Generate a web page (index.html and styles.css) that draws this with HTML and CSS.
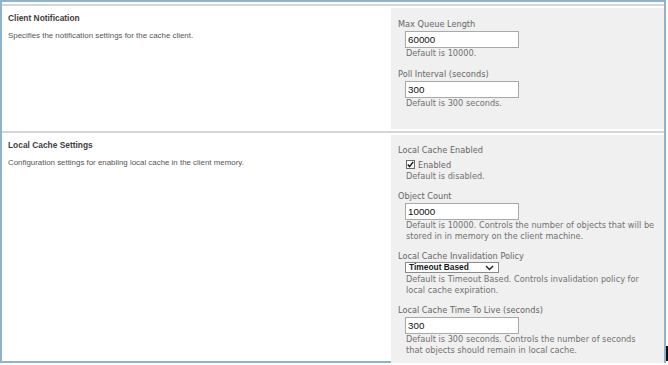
FILE: index.html
```html
<!DOCTYPE html>
<html>
<head>
<meta charset="utf-8">
<link rel="stylesheet" href="styles.css">
</head>
<body>
<div class="frame">
  <div class="section">
    <div class="info">
      <div class="title">Client Notification</div>
      <div class="summary">Specifies the notification settings for the cache client.</div>
    </div>
    <div class="fields first">
      <div class="field">
        <div class="label">Max Queue Length</div>
        <div class="textbox">60000</div>
        <div class="desc">Default is 10000.</div>
      </div>
      <div class="field">
        <div class="label">Poll Interval (seconds)</div>
        <div class="textbox">300</div>
        <div class="desc">Default is 300 seconds.</div>
      </div>
    </div>
  </div>
  <div class="section">
    <div class="info">
      <div class="title">Local Cache Settings</div>
      <div class="summary">Configuration settings for enabling local cache in the client memory.</div>
    </div>
    <div class="fields second">
      <div class="field">
        <div class="label">Local Cache Enabled</div>
        <div class="check-row">
          <span class="checkbox"><svg width="7" height="7" viewBox="0 0 7 7"><path d="M0.8 3.6 L2.6 5.6 L6.2 0.9" fill="none" stroke="#1b1b1b" stroke-width="1.5"/></svg></span>
          <span class="check-label">Enabled</span>
        </div>
        <div class="desc">Default is disabled.</div>
      </div>
      <div class="field">
        <div class="label">Object Count</div>
        <div class="textbox">10000</div>
        <div class="desc">Default is 10000. Controls the number of objects that will be<br>stored in in memory on the client machine.</div>
      </div>
      <div class="field">
        <div class="label">Local Cache Invalidation Policy</div>
        <div class="select"><span>Timeout Based</span><svg class="chev" width="9" height="6" viewBox="0 0 9 6"><path d="M1 1 L4.5 4.6 L8 1" fill="none" stroke="#222" stroke-width="1.4"/></svg></div>
        <div class="desc">Default is Timeout Based. Controls invalidation policy for<br>local cache expiration.</div>
      </div>
      <div class="field">
        <div class="label">Local Cache Time To Live (seconds)</div>
        <div class="textbox">300</div>
        <div class="desc">Default is 300 seconds. Controls the number of seconds<br>that objects should remain in local cache.</div>
      </div>
    </div>
  </div>
  <div class="edge-mark"></div>
</div>
</body>
</html>
```

FILE: styles.css
```css
html, body {
  margin: 0;
  padding: 0;
  background: #ffffff;
}

.frame {
  position: relative;
  width: 662px;
  height: 359px;
  border: 2px solid #8fb3cd;
  display: flex;
  flex-direction: column;
}

.section {
  display: flex;
  margin-top: 2px;
  padding-top: 2px;
  border-top: 2px solid #d6d6d6;
}

.section:last-of-type {
  flex: 1;
}

.info {
  flex: 1;
  padding: 5px 0 0 6px;
  font-family: "Liberation Sans", Arial, sans-serif;
}

.title {
  font-size: 8.4px;
  font-weight: bold;
  color: #3d3d3d;
  line-height: 11px;
}

.summary {
  margin-top: 6px;
  font-size: 7.9px;
  color: #555555;
  line-height: 11px;
}

.fields {
  width: 266px;
  background: #f0f0f0;
  padding: 11px 0 20px 7px;
  display: flex;
  flex-direction: column;
  gap: 10px;
  font-family: "DejaVu Sans", Verdana, sans-serif;
  font-size: 8.2px;
  line-height: 10px;
}

.fields.second {
  padding-top: 10px;
  gap: 9px;
}

.label {
  color: #666666;
  white-space: nowrap;
}

.textbox {
  margin: 2px 0 0 7px;
  width: 114px;
  height: 17px;
  box-sizing: border-box;
  border: 1px solid #a9a9a9;
  background: #ffffff;
  padding: 0 2px;
  font-family: "Liberation Sans", Arial, sans-serif;
  font-size: 9.8px;
  line-height: 15px;
  color: #111111;
}

.desc {
  margin: 0 0 0 8px;
  color: #707070;
  line-height: 11px;
  white-space: nowrap;
}

.check-row {
  margin: 3px 0 0 8px;
  height: 13px;
  display: flex;
  align-items: center;
  gap: 3px;
}

.checkbox {
  width: 9px;
  height: 9px;
  box-sizing: border-box;
  border: 1px solid #6a6a6a;
  background: #fdfdfd;
  display: flex;
  align-items: center;
  justify-content: center;
}

.check-label {
  color: #666666;
}

.select {
  margin: 1px 0 1px 7px;
  width: 94px;
  height: 11px;
  box-sizing: border-box;
  border: 1px solid #8a8a8a;
  background: #ffffff;
  display: flex;
  align-items: center;
  justify-content: space-between;
  padding: 0 4px 0 3px;
  font-family: "Liberation Sans", Arial, sans-serif;
  font-size: 8.4px;
  font-weight: bold;
  color: #1a1a1a;
  line-height: 9px;
}

.edge-mark {
  position: absolute;
  right: -4px;
  bottom: 0;
  width: 2px;
  height: 15px;
  background: #111111;
}
```
